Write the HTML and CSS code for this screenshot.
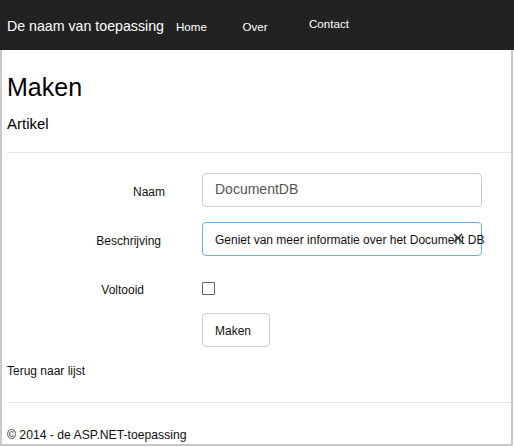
FILE: index.html
```html
<!DOCTYPE html>
<html lang="nl">
<head>
<meta charset="utf-8">
<title>Maken</title>
<link rel="stylesheet" href="styles.css">
</head>
<body>
<header class="navbar">
  <span class="brand">De naam van toepassing</span>
  <nav class="nav">
    <a class="nav-link">Home</a>
    <a class="nav-link">Over</a>
    <a class="nav-link nav-link--raised">Contact</a>
  </nav>
</header>
<div class="frame">
  <main class="content">
    <h2 class="title">Maken</h2>
    <h4 class="subtitle">Artikel</h4>
    <hr class="rule rule--top">
    <form class="form">
      <div class="row">
        <label class="label label--naam">Naam</label>
        <div class="field">
          <div class="input input--name">DocumentDB</div>
        </div>
      </div>
      <div class="row row--second">
        <label class="label label--desc">Beschrijving</label>
        <div class="field">
          <div class="input input--focus">Geniet van meer informatie over het Document DB</div>
          <svg class="clear" width="10" height="10" viewBox="0 0 10 10"><path d="M1 1 L9 9 M9 1 L1 9" stroke="#333" stroke-width="1.5" fill="none"/></svg>
        </div>
      </div>
      <div class="row row--check">
        <label class="label label--done">Voltooid</label>
        <div class="field">
          <span class="checkbox"></span>
        </div>
      </div>
      <div class="row row--button">
        <span class="label"></span>
        <div class="field">
          <span class="button">Maken</span>
        </div>
      </div>
    </form>
    <a class="back">Terug naar lijst</a>
    <hr class="rule rule--bottom">
    <footer class="footer">© 2014 - de ASP.NET-toepassing</footer>
  </main>
</div>
</body>
</html>
```
FILE: styles.css
```css
* { box-sizing: border-box; }
html, body { margin: 0; padding: 0; background: #fff; }
body {
  font-family: "Liberation Sans", Arial, sans-serif;
  color: #111;
  width: 514px;
  height: 447px;
  overflow: hidden;
}
.navbar {
  display: flex;
  align-items: flex-start;
  height: 50px;
  background: #222;
  padding-left: 7px;
}
.brand {
  width: 169px;
  padding-top: 18px;
  font-size: 14.2px;
  line-height: 16px;
  color: #fff;
  white-space: nowrap;
}
.nav { display: flex; align-items: flex-start; }
.nav-link {
  width: 66.5px;
  padding-top: 20px;
  font-size: 11.6px;
  line-height: 14px;
  color: #fff;
  white-space: nowrap;
}
.nav-link--raised { padding-top: 17px; }
.frame {
  width: 513px;
  height: 396px;
  border-left: 2px solid #c8c8c8;
  border-right: 2px solid #c8c8c8;
  border-bottom: 2px solid #c8c8c8;
}
.content {
  padding: 22px 0 0 5px;
}
.title {
  margin: 0;
  font-size: 25px;
  line-height: 30px;
  font-weight: normal;
  color: #000;
}
.subtitle {
  margin: 13px 0 0;
  font-size: 15px;
  line-height: 18px;
  font-weight: normal;
  color: #000;
}
.rule {
  border: 0;
  border-top: 1px solid #e6e6e6;
  margin: 0;
  height: 0;
}
.rule--top { margin-top: 19px; }
.rule--bottom { margin-top: 23px; }
.form {
  display: flex;
  flex-direction: column;
  padding-top: 20px;
}
.row {
  display: grid;
  grid-template-columns: 195px 280px;
  align-items: start;
}
.row--second { margin-top: 15px; }
.row--check { margin-top: 26px; }
.row--button { margin-top: 16px; }
.label {
  text-align: right;
  font-size: 12px;
  line-height: 14px;
  padding-top: 12px;
  color: #111;
}
.label--naam { padding-right: 37px; }
.label--desc { padding-right: 41px; }
.label--done { padding-right: 58px; padding-top: 1px; }
.field { position: relative; }
.input {
  height: 34px;
  border: 1px solid #ccc;
  border-radius: 4px;
  padding: 5px 12px 0;
  line-height: 20px;
  white-space: nowrap;
  overflow: visible;
  background: #fff;
}
.input--name {
  font-size: 14px;
  color: #555;
}
.input--focus {
  border-color: #66afe9;
  font-size: 12px;
  color: #111;
  padding-top: 7px;
}
.clear {
  position: absolute;
  top: 11px;
  right: 19px;
}
.checkbox {
  display: block;
  width: 13px;
  height: 13px;
  border: 1px solid #666;
  border-radius: 1px;
  background: #fff;
}
.button {
  display: block;
  width: 68px;
  height: 34px;
  border: 1px solid #ccc;
  border-radius: 4px;
  padding: 7px 0 0 12px;
  font-size: 12px;
  line-height: 20px;
  color: #111;
}
.back {
  display: block;
  margin-top: 16px;
  font-size: 12px;
  line-height: 16px;
  color: #111;
}
.footer {
  margin-top: 24px;
  font-size: 12.2px;
  line-height: 16px;
  color: #111;
}
```
